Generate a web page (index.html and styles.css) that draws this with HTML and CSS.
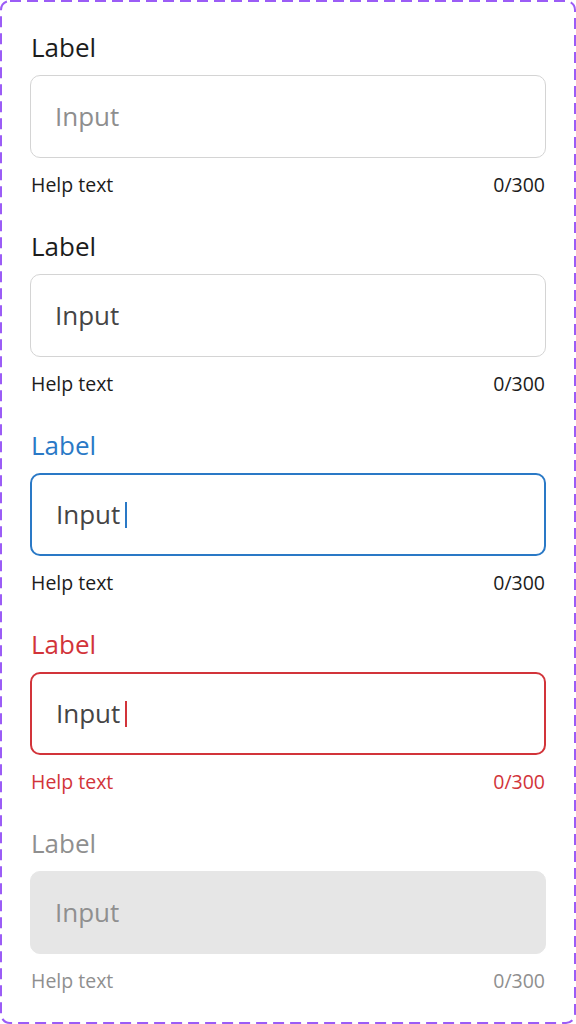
FILE: index.html
```html
<!DOCTYPE html>
<html lang="en">
<head>
    <meta charset="UTF-8">
    <meta name="viewport" content="width=device-width, initial-scale=1.0">
    <title>Text Field States</title>
    <link rel="stylesheet" href="styles.css">
</head>
<body>
    <main class="frame">
        <!-- dashed component-set outline -->
        <svg class="frame-outline" width="576" height="1024" viewBox="0 0 576 1024">
            <rect x="1" y="1" width="574" height="1022" rx="9" ry="9"
                  fill="none" stroke="#9b5cf6" stroke-width="2" stroke-dasharray="11 6"/>
        </svg>

        <div class="field">
            <div class="field-label">Label</div>
            <div class="field-box"><span class="field-value placeholder">Input</span></div>
            <div class="field-help"><span>Help text</span><span>0/300</span></div>
        </div>

        <div class="field filled">
            <div class="field-label">Label</div>
            <div class="field-box"><span class="field-value">Input</span></div>
            <div class="field-help"><span>Help text</span><span>0/300</span></div>
        </div>

        <div class="field focused">
            <div class="field-label">Label</div>
            <div class="field-box"><span class="field-value">Input</span><span class="caret"></span></div>
            <div class="field-help"><span>Help text</span><span>0/300</span></div>
        </div>

        <div class="field error">
            <div class="field-label">Label</div>
            <div class="field-box"><span class="field-value">Input</span><span class="caret"></span></div>
            <div class="field-help"><span>Help text</span><span>0/300</span></div>
        </div>

        <div class="field disabled">
            <div class="field-label">Label</div>
            <div class="field-box"><span class="field-value">Input</span></div>
            <div class="field-help"><span>Help text</span><span>0/300</span></div>
        </div>
    </main>
</body>
</html>
```

FILE: styles.css
```css
/* Base Styles */
* {
    margin: 0;
    padding: 0;
    box-sizing: border-box;
}

body {
    font-family: 'Open Sans', 'Noto Sans', sans-serif;
    color: #1c1c1c;
    background: #fff;
}

/* Component frame */
.frame {
    position: relative;
    width: 576px;
    height: 1024px;
    padding: 29px 30px 0 30px;
    display: flex;
    flex-direction: column;
    gap: 30px;
}

.frame-outline {
    position: absolute;
    top: 0;
    left: 0;
    pointer-events: none;
}

/* Field */
.field {
    display: flex;
    flex-direction: column;
}

.field-label {
    font-size: 26px;
    line-height: 36px;
    color: #1c1c1c;
    padding-left: 1px;
}

.field-box {
    margin-top: 10px;
    height: 83px;
    border: 1.5px solid #d4d4d4;
    border-radius: 10px;
    background: #fff;
    display: flex;
    align-items: center;
    padding: 0 24px;
}

.field-value {
    font-size: 26px;
    line-height: 36px;
    color: #454545;
    margin-top: -2px;
}

.field-value.placeholder {
    color: #8e8e8e;
}

.caret {
    width: 2px;
    height: 26px;
    margin-left: 5px;
    background: #2a79c6;
}

.field-help {
    margin-top: 14px;
    display: flex;
    justify-content: space-between;
    font-size: 19.5px;
    line-height: 26px;
    color: #1c1c1c;
    padding: 0 1px;
}

/* States */
.focused .field-label {
    color: #2a79c6;
}

.focused .field-box {
    border: 2px solid #2a79c6;
}

.error .field-label,
.error .field-help {
    color: #d2343a;
}

.error .field-box {
    border: 2px solid #d2343a;
}

.error .caret {
    background: #d2343a;
}

.disabled .field-label,
.disabled .field-help {
    color: #8f8f8f;
}

.disabled .field-box {
    background: #e6e6e6;
    border-color: #e6e6e6;
}

.disabled .field-value {
    color: #8f8f8f;
}
```
